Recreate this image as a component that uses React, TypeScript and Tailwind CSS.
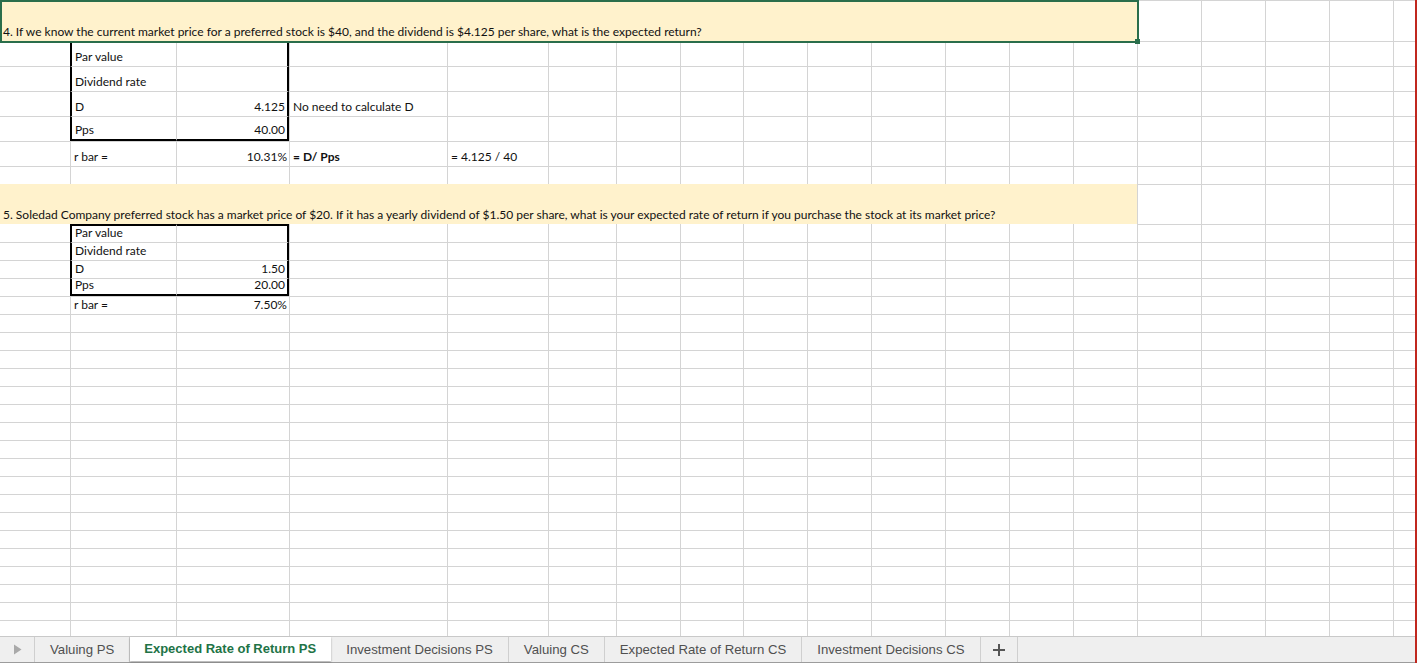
import React from "react";

type Cell = { t: string; align?: "r"; bold?: boolean };

const Q4 =
  "4. If we know the current market price for a preferred stock is $40, and the dividend is $4.125 per share, what is the expected return?";
const Q5 =
  "5. Soledad Company preferred stock has a market price of $20. If it has a yearly dividend of $1.50 per share, what is your expected rate of return if you purchase the stock at its market price?";

const DATA: Record<string, Cell> = {
  "2-1": { t: "Par value" },
  "3-1": { t: "Dividend rate" },
  "4-1": { t: "D" },
  "4-2": { t: "4.125", align: "r" },
  "4-3": { t: "No need to calculate D" },
  "5-1": { t: "Pps" },
  "5-2": { t: "40.00", align: "r" },
  "6-1": { t: "r bar =" },
  "6-2": { t: "10.31%", align: "r" },
  "6-3": { t: "= D/ Pps", bold: true },
  "6-4": { t: "= 4.125 / 40" },
  "9-1": { t: "Par value" },
  "10-1": { t: "Dividend rate" },
  "11-1": { t: "D" },
  "11-2": { t: "1.50", align: "r" },
  "12-1": { t: "Pps" },
  "12-2": { t: "20.00", align: "r" },
  "13-1": { t: "r bar =" },
  "13-2": { t: "7.50%", align: "r" },
};

const NCOLS = 19;
const NROWS = 32;
const BOXES = [
  { r1: 2, r2: 5 },
  { r1: 9, r2: 12 },
];

function cellClass(r: number, c: number): string {
  const box = BOXES.find((b) => r >= b.r1 && r <= b.r2 && (c === 1 || c === 2));
  const parts: string[] = ["flex items-end min-w-0 whitespace-nowrap"];
  if (box && c === 1) parts.push("border-l-2 border-l-black");
  else if (c > 0) parts.push("border-l border-l-[#d4d4d4]");
  if (box && c === 2) parts.push("border-r-2 border-r-black");
  if (box && r === 9) parts.push("border-t-2 border-t-black");
  else if ((r === 2 || r === 9) && c < 14) {
    // hidden by fill / selection
  } else parts.push("border-t border-t-[#d4d4d4]");
  if (box && r === box.r2) parts.push("border-b-2 border-b-black");
  const d = DATA[`${r}-${c}`];
  if (d && d.align === "r") parts.push("justify-end");
  return parts.join(" ");
}

function Sheet() {
  const cells: React.ReactNode[] = [];
  for (let r = 1; r <= NROWS; r++) {
    for (let c = 0; c < NCOLS; c++) {
      if ((r === 1 || r === 8) && c < 14) {
        if (c === 0) {
          cells.push(
            <div
              key={`${r}-m`}
              className="col-span-14 flex items-end bg-[#fff2cc] whitespace-nowrap"
            >
              <span className="px-[3px] leading-[18px]">{r === 1 ? Q4 : Q5}</span>
            </div>
          );
        }
        continue;
      }
      const d = DATA[`${r}-${c}`];
      cells.push(
        <div key={`${r}-${c}`} className={cellClass(r, c)}>
          {d ? (
            <span
              className={
                d.align === "r"
                  ? "pr-[2px] leading-[18px]"
                  : d.bold
                  ? "pl-[3px] leading-[18px] font-bold"
                  : "pl-[3px] leading-[18px]"
              }
            >
              {d.t}
            </span>
          ) : null}
        </div>
      );
    }
  }
  return (
    <div className="relative h-[636px] overflow-hidden">
      <div className="grid grid-cols-[70px_106px_113px_158px_101px_68px_64px_63px_64px_64px_74px_64px_64px_64px_64px_64px_64px_64px_22px] grid-rows-[41px_25px_25px_25px_25px_25px_18px_40px] auto-rows-[18px] font-['Lato',sans-serif] text-[12px] text-[#111]">
        {cells}
      </div>
      <div className="absolute left-0 top-0 w-[1139px] h-[43px] border-2 border-[#2a6e4b] pointer-events-none" />
      <div className="absolute left-[1135px] top-[39px] w-[5px] h-[5px] bg-[#2a6e4b] pointer-events-none" />
    </div>
  );
}

const TABS = [
  "Valuing PS",
  "Expected Rate of Return PS",
  "Investment Decisions PS",
  "Valuing CS",
  "Expected Rate of Return CS",
  "Investment Decisions CS",
];

function TabBar() {
  return (
    <div className="h-[27px] flex items-stretch bg-[#efefef] border-t border-t-[#c9c9c9] border-b border-b-[#9c9c9c] font-['Liberation_Sans',Arial,sans-serif] text-[13.2px] text-[#505050]">
      <div className="w-[35px] flex items-center justify-center border-r border-r-[#cfcfcf]">
        <svg width="9" height="11" viewBox="0 0 9 11">
          <polygon points="1,0.5 8.5,5.5 1,10.5" fill="#a9a9a9" />
        </svg>
      </div>
      {TABS.map((t, i) =>
        i === 1 ? (
          <div
            key={t}
            className="self-start h-[24px] flex items-center pl-[14px] pr-[15px] bg-white shadow-[0_1px_2px_rgba(0,0,0,0.3)] font-bold text-[13px] text-[#217346]"
          >
            {t}
          </div>
        ) : (
          <div
            key={t}
            className="flex items-center px-[15px] border-r border-r-[#cfcfcf]"
          >
            {t}
          </div>
        )
      )}
      <div className="w-[37px] flex items-center justify-center border-r border-r-[#cfcfcf]">
        <svg width="12" height="12" viewBox="0 0 12 12">
          <rect x="5" y="0" width="2" height="12" fill="#555" />
          <rect x="0" y="5" width="12" height="2" fill="#555" />
        </svg>
      </div>
    </div>
  );
}

export default function App() {
  return (
    <div className="w-[1417px] h-[663px] overflow-hidden bg-white flex">
      <div className="w-[1415px] flex flex-col">
        <Sheet />
        <TabBar />
      </div>
      <div className="w-[2px] bg-[#c0281f]" />
    </div>
  );
}
